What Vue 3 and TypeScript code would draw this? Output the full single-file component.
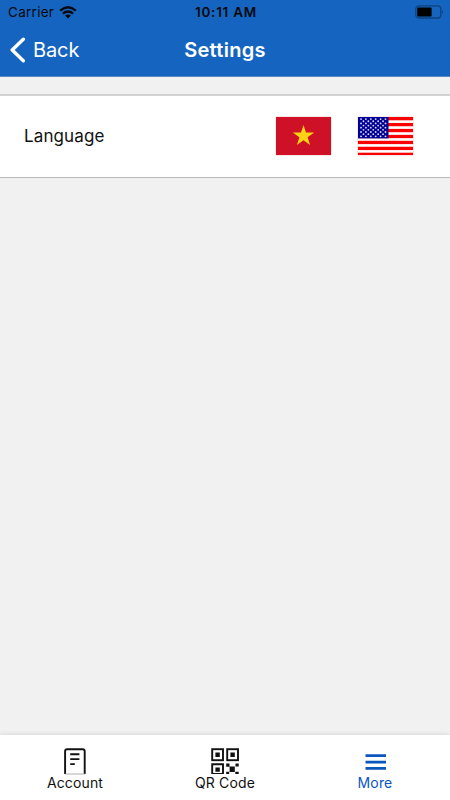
<template>
  <div class="screen">
    <header class="header">
      <div class="status-bar">
        <div class="carrier">
          <span>Carrier</span>
          <svg class="wifi" width="18" height="13" viewBox="0 0 18 13">
            <path d="M1.2 4.7Q9-2.1 16.8 4.7" />
            <path d="M3.9 7.6Q9 3.3 14.1 7.6" />
            <path class="wifi-dot" d="M9 12.4L6.1 9.6Q9 7.4 11.9 9.6Z" />
          </svg>
        </div>
        <span class="time">10:11 AM</span>
        <svg class="battery" width="29" height="14" viewBox="0 0 29 14">
          <rect class="battery-case" x="0.8" y="0.8" width="25" height="12.2" rx="3" />
          <rect x="2.2" y="2.4" width="14.4" height="9" rx="1" />
          <path class="battery-tip" d="M27.1 5Q29.2 7 27.1 9Z" />
        </svg>
      </div>
      <nav class="nav-bar">
        <button class="back" type="button">
          <svg width="16" height="26" viewBox="0 0 16 26">
            <path d="M13.3 2.2L2.2 13L13.3 23.8" />
          </svg>
          <span>Back</span>
        </button>
        <h1 class="title">Settings</h1>
      </nav>
    </header>

    <main class="content">
      <section class="row">
        <span class="row-label">Language</span>
        <div class="flags">
          <button
            v-for="language in languages"
            :key="language.code"
            class="flag"
            type="button"
            :aria-label="language.name"
            @click="selected = language.code"
          >
            <svg v-if="language.code === 'vi'" width="57" height="40" viewBox="0 0 57 40">
              <rect class="flag-halo" x="0.5" y="0.5" width="56" height="39" />
              <rect x="1" y="1" width="55" height="38" fill="#ce1126" />
              <path
                d="M28.5 9L31 16.5H39.2L32.6 21.2L35.1 29L28.5 24.2L21.9 29L24.4 21.2L17.8 16.5H26Z"
                fill="#fcd116"
              />
            </svg>
            <svg v-else width="57" height="40" viewBox="0 0 57 40">
              <rect class="flag-halo" x="0.5" y="0.5" width="56" height="39" />
              <rect x="1" y="1" width="55" height="38" fill="#fff" />
              <rect
                v-for="n in 7"
                :key="n"
                x="1"
                :y="1 + (n - 1) * 5.95"
                width="55"
                :height="n === 7 ? 2.3 : 3.3"
                fill="#f00"
              />
              <rect x="1" y="1" width="30.5" height="21.4" fill="#000095" />
              <circle
                v-for="(star, i) in stars"
                :key="'star' + i"
                :cx="star.x"
                :cy="star.y"
                r="0.92"
                fill="#dcdcf4"
              />
            </svg>
          </button>
        </div>
      </section>
    </main>

    <footer class="tab-bar">
      <a
        v-for="tab in tabs"
        :key="tab.id"
        class="tab"
        :class="{ active: tab.id === activeTab }"
        @click="activeTab = tab.id"
      >
        <svg v-if="tab.id === 'account'" class="icon" width="24" height="27" viewBox="0 0 24 27">
          <path class="page" d="M2.1 26V3.2Q2.1 1.2 4.1 1.2H19.7Q21.7 1.2 21.7 3.2V26" />
          <path class="page-edge" d="M2 26H22" />
          <path class="page-lines" d="M7.2 6.3H16.4M7.2 11.1H16.4M7.2 16.1H11.8" />
        </svg>
        <svg v-else-if="tab.id === 'qr'" class="icon" width="28" height="27" viewBox="0 0 28 27">
          <g class="qr-frames">
            <rect x="1.2" y="1.2" width="10.8" height="11" />
            <rect x="16.2" y="1.2" width="10.8" height="11" />
            <path d="M1.2 26V16.2H12V26" />
          </g>
          <path
            d="M4.4 4.5h4.4v4.4H4.4zM19.4 4.5h4.4v4.4h-4.4zM4.4 19.4h4.4v4.4H4.4zM1 24.9h11v1.1H1z"
          />
          <path
            d="M15.2 15.4h3.3v3.3h-3.3zM24.5 15.4h3.2v3.2h-3.2zM18.6 18.6h5.2v5.3h-5.2zM15.2 23.8h3v2.2h-3zM24.3 23.8h3.4v2.2h-3.4z"
          />
        </svg>
        <svg v-else class="icon" width="24" height="27" viewBox="0 0 24 27">
          <path d="M2.5 6.2H23v2.7H2.5zM2.5 12.8H23v2.7H2.5zM2.5 19H23v2.7H2.5z" />
        </svg>
        <span class="tab-label">{{ tab.label }}</span>
      </a>
    </footer>
  </div>
</template>

<script setup lang="ts">
import { ref } from "vue";

interface Language {
  code: string;
  name: string;
}

interface Tab {
  id: string;
  label: string;
}

const languages: Language[] = [
  { code: "vi", name: "Tiếng Việt" },
  { code: "en", name: "English" },
];

const tabs: Tab[] = [
  { id: "account", label: "Account" },
  { id: "qr", label: "QR Code" },
  { id: "more", label: "More" },
];

const selected = ref("en");
const activeTab = ref("more");

// Alternating rows of six and five stars
const stars: { x: number; y: number }[] = [];
for (let row = 0; row < 9; row++) {
  const count = row % 2 === 0 ? 6 : 5;
  for (let col = 0; col < count; col++) {
    stars.push({
      x: 4 + (row % 2 === 0 ? 0 : 2.45) + col * 4.9,
      y: 3.1 + row * 2.15,
    });
  }
}
</script>

<style>
body {
  margin: 0;
}
</style>

<style scoped>
.screen {
  display: flex;
  flex-direction: column;
  height: 100vh;
  background: #f1f1f1;
  color: #111;
  font-family: Inter, "Liberation Sans", sans-serif;
}

button {
  padding: 0;
  border: 0;
  background: none;
  color: inherit;
  font: inherit;
}

.header {
  height: 76px;
  background: #1565c0;
  border-bottom: 1px solid #5c86c5;
}

.status-bar {
  display: grid;
  grid-template-columns: 1fr auto 1fr;
  align-items: center;
  height: 24px;
  padding: 0 6px 0 8px;
  color: #07090d;
  font-size: 13.5px;
}

.carrier {
  display: flex;
  align-items: center;
  gap: 5px;
  letter-spacing: 0.28px;
}

.wifi {
  fill: none;
  stroke: #07090d;
  stroke-width: 2.3;
}

.wifi-dot {
  fill: #07090d;
  stroke: none;
}

.time {
  font-weight: 600;
  font-size: 13.5px;
  letter-spacing: 0.75px;
}

.battery {
  justify-self: end;
  fill: #000;
}

.battery-case {
  fill: none;
  stroke: #0e427d;
  stroke-width: 1.3;
}

.battery-tip {
  fill: #0e427d;
}

.nav-bar {
  display: grid;
  grid-template-columns: 1fr auto 1fr;
  align-items: center;
  height: 52px;
  padding: 0 9px;
  color: #fff;
}

.back {
  display: flex;
  align-items: center;
  gap: 7px;
  padding-left: 1px;
  font-size: 20px;
  letter-spacing: -0.1px;
}

.back svg {
  fill: none;
  stroke: #fff;
  stroke-width: 3.4;
  stroke-linecap: round;
  stroke-linejoin: round;
}

.title {
  margin: 0;
  font-size: 20px;
  font-weight: 600;
  letter-spacing: 0.3px;
}

.content {
  flex: 1;
  padding-top: 17px;
}

.row {
  display: flex;
  align-items: center;
  justify-content: space-between;
  box-sizing: border-box;
  height: 84px;
  padding: 0 36px 2px 24px;
  background: #fff;
  border-top: 2px solid #d2d2d2;
  border-bottom: 1px solid #b8b8b8;
}

.row-label {
  font-size: 17px;
  letter-spacing: 0.12px;
}

.flags {
  display: flex;
  gap: 25px;
}

.flag svg {
  display: block;
}

.flag-halo {
  fill: #f8d4d6;
}

.tab-bar {
  display: flex;
  height: 65px;
  background: #fff;
  box-shadow: 0 0 5px rgba(0, 0, 0, 0.14);
}

.tab {
  display: flex;
  flex: 1;
  flex-direction: column;
  align-items: center;
  padding-top: 13px;
}

.tab.active {
  color: #0b56bd;
}

.icon {
  display: block;
  fill: currentColor;
}

.page,
.page-edge,
.page-lines,
.qr-frames {
  fill: none;
  stroke: currentColor;
  stroke-width: 1.9;
}

.page-edge {
  stroke: #999;
  stroke-width: 0.8;
}

.tab-label {
  font-size: 14px;
  line-height: 15px;
  letter-spacing: 0.15px;
}
</style>
